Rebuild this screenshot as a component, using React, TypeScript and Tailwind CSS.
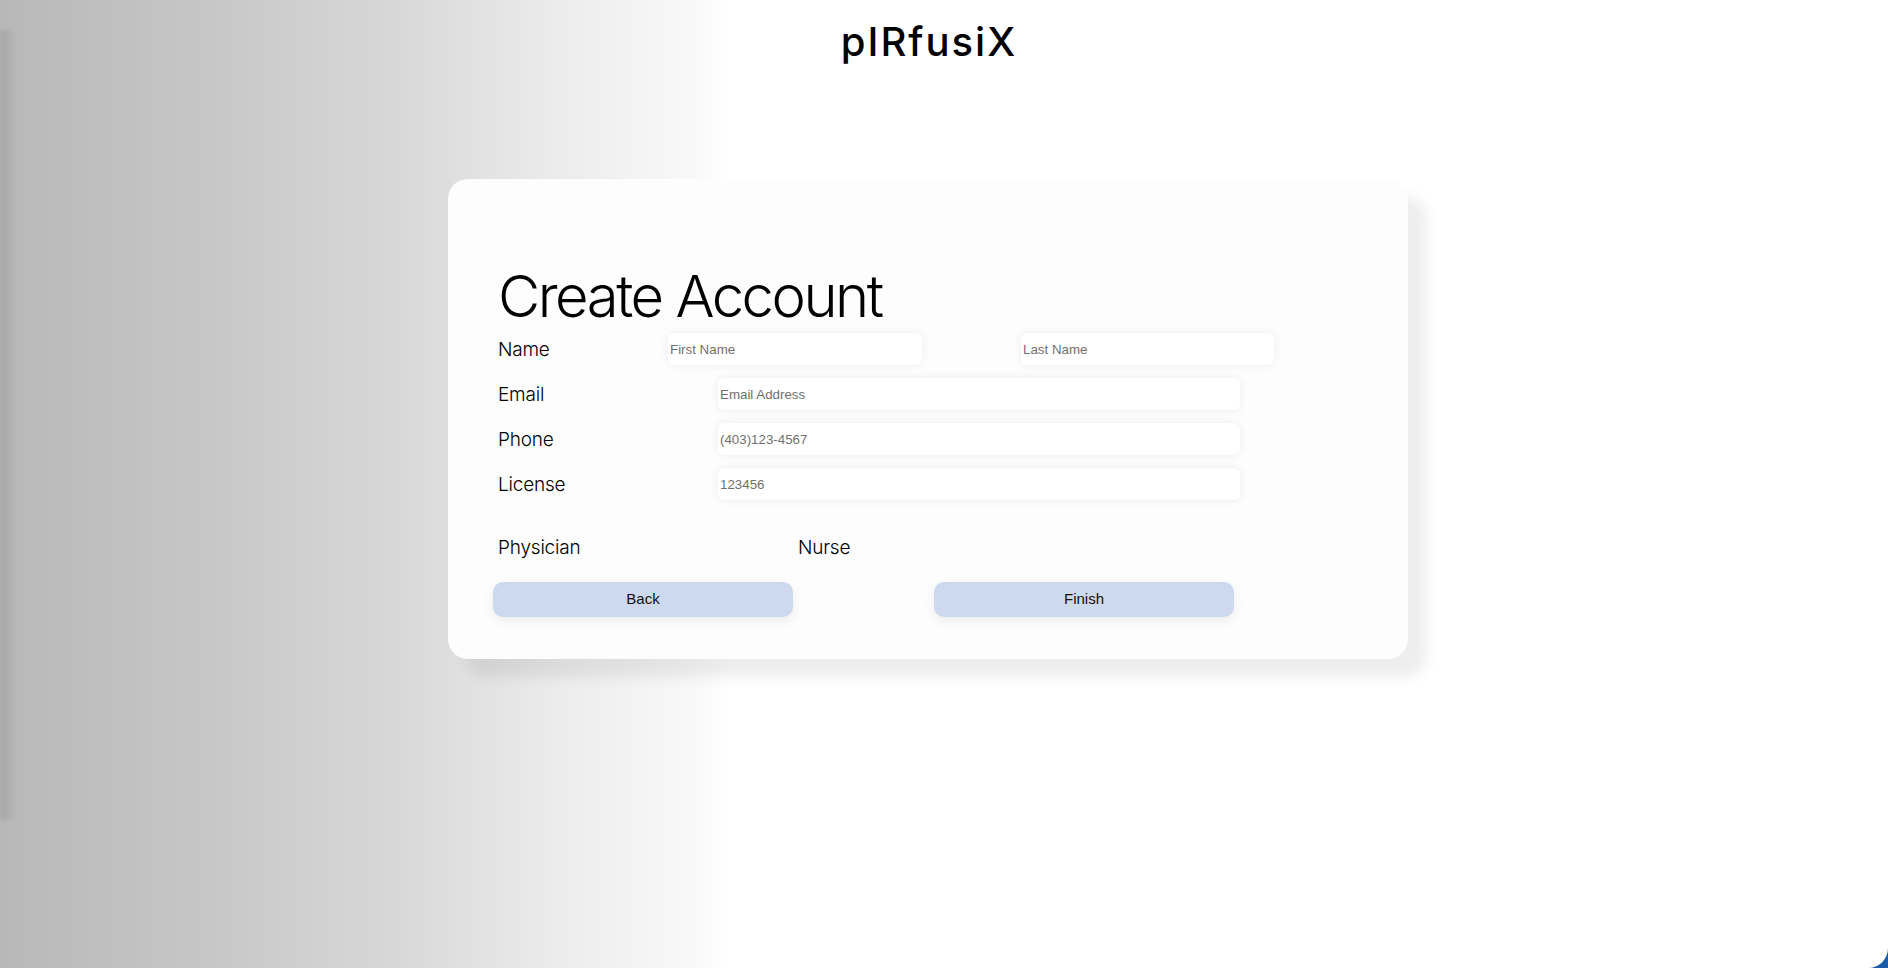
import React from "react";

const inputCls =
  "h-8 rounded-[6px] bg-white pl-[2px] text-[13.33px] text-black placeholder:text-[#707070] outline-none shadow-[0_0_10px_rgba(0,0,0,0.07)] [font-family:'Liberation_Sans',Arial,sans-serif]";

const labelCls = "text-[19px] leading-none font-light tracking-[-0.2px] text-black";

export default function App() {
  return (
    <div className="h-[968px] w-full overflow-hidden bg-[#1a5ca8]">
      <div className="relative h-full w-full overflow-hidden rounded-br-[20px] bg-[linear-gradient(to_right,#b8b8b8_0px,#c6c6c6_200px,#d8d8d8_400px,#ececec_560px,#f8f8f8_690px,#ffffff_730px)] [font-family:Inter,'Noto_Sans',sans-serif]">
        <div className="absolute left-0 top-[30px] h-[790px] w-[16px] bg-[linear-gradient(to_right,rgba(0,0,0,0.1),rgba(0,0,0,0))] blur-[2px]" />
        <div className="relative flex w-[1856px] flex-col items-center">
          <h1 className="mt-[22px] pl-[2px] text-[40px] leading-none font-medium tracking-[2px] text-black">pIRfusiX</h1>
          <div className="mt-[117px] w-[960px] rounded-[20px] bg-[#fdfdfd] pb-[42px] pl-[50px] pt-[88px] shadow-[18px_18px_14px_rgba(0,0,0,0.07)]">
            <h2 className="text-[58px] leading-none font-light tracking-[-2.5px] text-black">Create Account</h2>
            <div className="mt-[8px] flex flex-col gap-[13px]">
              <div className="flex h-8 items-center">
                <span className={`${labelCls} w-[170px]`}>Name</span>
                <input className={`${inputCls} w-[254px]`} placeholder="First Name" />
                <input className={`${inputCls} ml-[99px] w-[253px]`} placeholder="Last Name" />
              </div>
              <div className="flex h-8 items-center">
                <span className={`${labelCls} w-[220px]`}>Email</span>
                <input className={`${inputCls} w-[522px]`} placeholder="Email Address" />
              </div>
              <div className="flex h-8 items-center">
                <span className={`${labelCls} w-[220px]`}>Phone</span>
                <input className={`${inputCls} w-[522px]`} placeholder="(403)123-4567" />
              </div>
              <div className="flex h-8 items-center">
                <span className={`${labelCls} w-[220px]`}>License</span>
                <input className={`${inputCls} w-[522px]`} placeholder="123456" />
              </div>
            </div>
            <div className="mt-[38px] flex">
              <span className={`${labelCls} w-[300px]`}>Physician</span>
              <span className={labelCls}>Nurse</span>
            </div>
            <div className="-ml-[5px] mt-[25px] flex gap-[141px]">
              <button className="h-[35px] w-[300px] rounded-[10px] bg-[#cdd9ee] text-[15px] text-[#111] shadow-[0_4px_12px_rgba(0,0,0,0.07)] [font-family:'Liberation_Sans',Arial,sans-serif]">
                Back
              </button>
              <button className="h-[35px] w-[300px] rounded-[10px] bg-[#cdd9ee] text-[15px] text-[#111] shadow-[0_4px_12px_rgba(0,0,0,0.07)] [font-family:'Liberation_Sans',Arial,sans-serif]">
                Finish
              </button>
            </div>
          </div>
        </div>
      </div>
    </div>
  );
}
